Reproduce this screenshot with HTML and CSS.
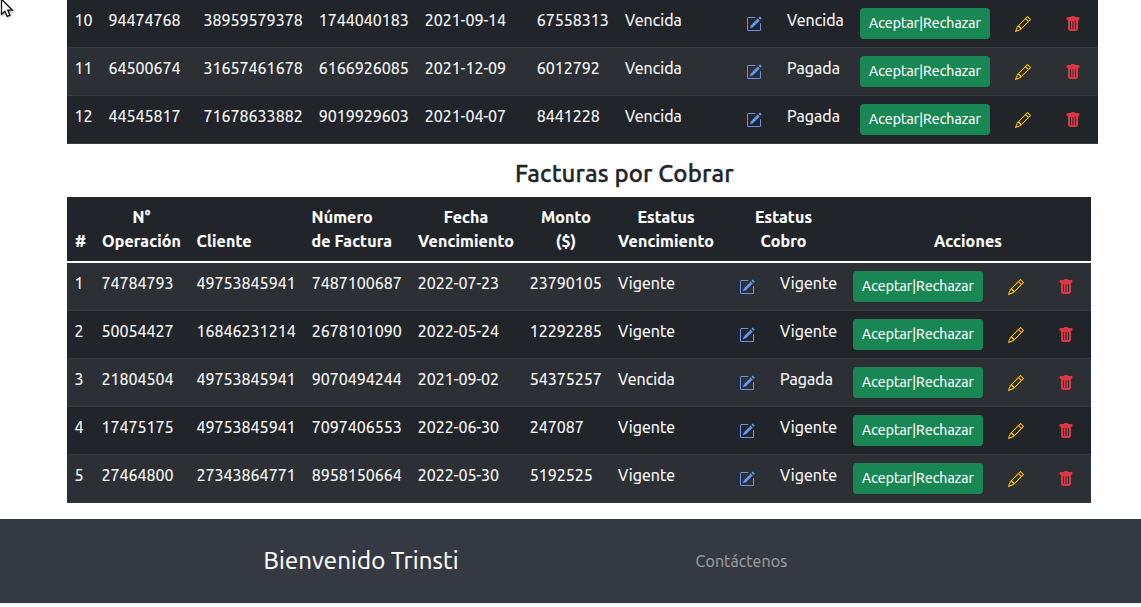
FILE: index.html
```
<!DOCTYPE html>
<html lang="es">
<head>
<meta charset="utf-8">
<title>Facturas</title>
<link rel="stylesheet" href="styles.css">
</head>
<body>
<svg class="defs" width="0" height="0" aria-hidden="true">
  <symbol id="edit" viewBox="0 0 16 16"><path d="M15.502 1.94a.5.5 0 0 1 0 .706L14.459 3.69l-2-2L13.502.646a.5.5 0 0 1 .707 0l1.293 1.293zm-1.75 2.456-2-2L4.939 9.21a.5.5 0 0 0-.121.196l-.805 2.414a.25.25 0 0 0 .316.316l2.414-.805a.5.5 0 0 0 .196-.12l6.813-6.814z"/><path fill-rule="evenodd" d="M1 13.5A1.5 1.5 0 0 0 2.500 15h11a1.5 1.5 0 0 0 1.500-1.500v-6a.5.5 0 0 0-1 0v6a.5.5 0 0 1-.5.5h-11a.5.5 0 0 1-.5-.5v-11a.5.5 0 0 1 .5-.5H9a.5.5 0 0 0 0-1H2.500A1.5 1.5 0 0 0 1 2.500v11z"/></symbol>
  <symbol id="pencil" viewBox="0 0 16 16"><path d="M12.146.146a.5.5 0 0 1 .708 0l3 3a.5.5 0 0 1 0 .708l-10 10a.5.5 0 0 1-.168.11l-5 2a.5.5 0 0 1-.65-.65l2-5a.5.5 0 0 1 .11-.168l10-10zM11.207 2.500 13.500 4.793 14.793 3.500 12.500 1.207 11.207 2.500zm1.586 3L10.500 3.207 4 9.707V10h.5a.5.5 0 0 1 .5.5v.5h.5a.5.5 0 0 1 .5.5v.5h.293l6.500-6.500zm-9.761 5.175-.106.106-1.528 3.821 3.821-1.528.106-.106A.5.5 0 0 1 5 12.500V12h-.5a.5.5 0 0 1-.5-.5V11h-.5a.5.5 0 0 1-.468-.325z"/></symbol>
  <symbol id="trash" viewBox="0 0 16 16"><path d="M2.500 1a1 1 0 0 0-1 1v1a1 1 0 0 0 1 1H3v9a2 2 0 0 0 2 2h6a2 2 0 0 0 2-2V4h.5a1 1 0 0 0 1-1V2a1 1 0 0 0-1-1H10a1 1 0 0 0-1-1H7a1 1 0 0 0-1 1H2.500zm3 4a.5.5 0 0 1 .5.5v7a.5.5 0 0 1-1 0v-7a.5.5 0 0 1 .5-.5zM8 5a.5.5 0 0 1 .5.5v7a.5.5 0 0 1-1 0v-7A.5.5 0 0 1 8 5zm3 .5v7a.5.5 0 0 1-1 0v-7a.5.5 0 0 1 1 0z"/></symbol>
</svg>
<svg class="cursor" width="16" height="20" viewBox="0 0 16 20"><path d="M1.500-.8V14.200L4.900 11.200 7.200 16.300 9.900 15.200 7.800 10.200H12.300Z"/></svg>
<main class="content">
  <table class="table first"><colgroup id="cols1"></colgroup><tbody id="payable"></tbody></table>
  <h4 class="title">Facturas por Cobrar</h4>
  <table class="table second"><colgroup id="cols2"></colgroup>
    <thead><tr><th>#</th><th>N°<br>Operación</th><th class="start">Cliente</th><th class="start">Número<br>de Factura</th><th>Fecha<br>Vencimiento</th><th>Monto<br>($)</th><th>Estatus<br>Vencimiento</th><th colspan="2">Estatus<br>Cobro</th><th colspan="3">Acciones</th></tr></thead>
    <tbody id="receivable"></tbody>
  </table>
</main>
<footer class="footer"><div class="brand">Bienvenido Trinsti</div><a class="contact">Contáctenos</a></footer>
<script src="app.js"></script>
</body>
</html>
```
FILE: styles.css
```
* { box-sizing: border-box; }
body { margin: 0; height: 607px; overflow: hidden; background: #fff; color: #212529; font: 16px/24px "Ubuntu", "Noto Sans", sans-serif; -webkit-text-stroke: .18px currentColor; }
.defs { display: block; }
.cursor { position: absolute; left: 0; top: 0; z-index: 2; fill: #fff; stroke: #111; stroke-width: 1.3; filter: drop-shadow(1px 1px 1px rgba(0, 0, 0, .3)); }
.content { padding-left: 67px; }
.table { table-layout: fixed; border-collapse: separate; border-spacing: 0; margin: 0 0 16px; background: #212529; color: #fff; }
.first { width: 1031px; }
.second { width: 1024px; }
.w-id1 { width: 34px; }
.w-id2 { width: 27px; }
.w-op { width: 95px; }
.w-client { width: 115px; }
.w-number { width: 106px; }
.w-date { width: 112px; }
.w-amount { width: 88px; }
.w-due { width: 112px; }
.w-icon { width: 50px; }
.w-status { width: 73px; }
.w-action { width: 146px; }
td { height: 48px; padding: 8px 0 8px 7.600px; vertical-align: top; border-bottom: 1px solid #373b3e; line-height: 24px; white-space: nowrap; }
.word, .control { padding-left: 8px; }
.word { letter-spacing: .06px; }
.num { letter-spacing: -.02px; }
.num:nth-child(n+4) { padding-left: 7.800px; }
.striped td { background: #2c3034; }
th { height: 66px; padding: 8px 0; vertical-align: bottom; text-align: center; font-weight: 700; line-height: 24px; border-bottom: 2px solid #fff; letter-spacing: .14px; white-space: nowrap; }
th.start { text-align: left; padding-left: 7.600px; }
.icon { display: block; width: 16px; height: 16px; margin: 8px 0 0 9px; fill: currentColor; }
.edit { color: #6495ed; }
.pencil { color: #ffc107; }
.trash { color: #dc3545; }
.btn { display: block; width: 130px; height: 31px; padding: 4px 0; border: 1px solid #198754; border-radius: 3.2px; background: #198754; color: #fff; font: 14px/21px "Ubuntu", "Noto Sans", sans-serif; letter-spacing: .1px; text-align: center; }
.title { margin: -1px 0 9px; padding-left: 448px; font-size: 24px; line-height: 29px; font-weight: 500; height: 29px; letter-spacing: .12px; -webkit-text-stroke: .35px #212529; }
.footer { display: flex; height: 85px; padding: 0 0 1px 263.600px; background: #353941; border-bottom: 1px solid #e3e5f0; color: #fff; align-items: center; }
.brand { width: 432px; font-size: 24px; line-height: 29px; letter-spacing: .12px; }
.contact { color: #9a9c9f; padding-top: 1px; letter-spacing: .08px; }
```
FILE: app.js
```
const columns = ["op", "client", "number", "date", "amount", "due", "icon", "status", "action", "icon", "icon"];
const payable = [
  ["10", "94474768", "38959579378", "1744040183", "2021-09-14", "67558313", "Vencida", "Vencida"],
  ["11", "64500674", "31657461678", "6166926085", "2021-12-09", "6012792", "Vencida", "Pagada"],
  ["12", "44545817", "71678633882", "9019929603", "2021-04-07", "8441228", "Vencida", "Pagada"]
];
const receivable = [
  ["1", "74784793", "49753845941", "7487100687", "2022-07-23", "23790105", "Vigente", "Vigente"],
  ["2", "50054427", "16846231214", "2678101090", "2022-05-24", "12292285", "Vigente", "Vigente"],
  ["3", "21804504", "49753845941", "9070494244", "2021-09-02", "54375257", "Vencida", "Pagada"],
  ["4", "17475175", "49753845941", "7097406553", "2022-06-30", "247087", "Vigente", "Vigente"],
  ["5", "27464800", "27343864771", "8958150664", "2022-05-30", "5192525", "Vigente", "Vigente"]
];
const icon = name => `<td class="control"><svg class="icon ${name}"><use href="#${name}"/></svg></td>`;
const cols = id => [id, ...columns].map(c => `<col class="w-${c}">`).join("");
const row = (r, striped) => `<tr class="${striped ? "striped" : ""}">` +
  r.slice(0, 6).map(v => `<td class="num">${v}</td>`).join("") +
  `<td class="word">${r[6]}</td>${icon("edit")}<td class="word">${r[7]}</td>` +
  `<td class="control"><button class="btn">Aceptar|Rechazar</button></td>${icon("pencil")}${icon("trash")}</tr>`;
document.getElementById("cols1").innerHTML = cols("id1");
document.getElementById("cols2").innerHTML = cols("id2");
document.getElementById("payable").innerHTML = payable.map((r, i) => row(r, i % 2 === 1)).join("");
document.getElementById("receivable").innerHTML = receivable.map((r, i) => row(r, i % 2 === 0)).join("");
```
